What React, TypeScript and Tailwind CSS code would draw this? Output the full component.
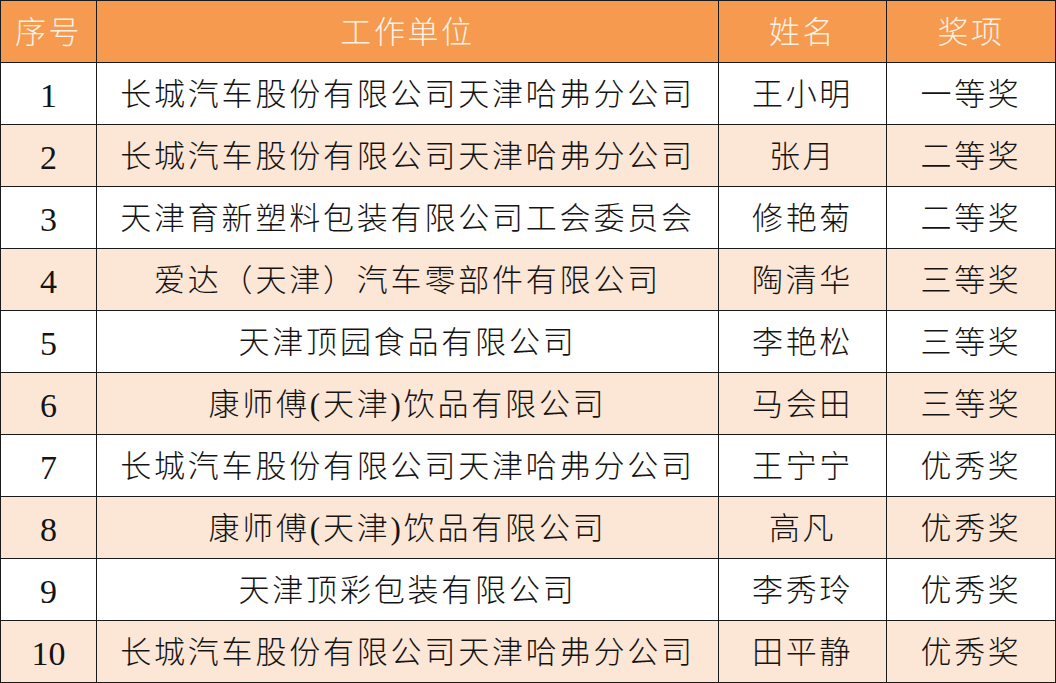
import React from "react";

const rows: [string, string, string, string][] = [
  ["1", "长城汽车股份有限公司天津哈弗分公司", "王小明", "一等奖"],
  ["2", "长城汽车股份有限公司天津哈弗分公司", "张月", "二等奖"],
  ["3", "天津育新塑料包装有限公司工会委员会", "修艳菊", "二等奖"],
  ["4", "爱达（天津）汽车零部件有限公司", "陶清华", "三等奖"],
  ["5", "天津顶园食品有限公司", "李艳松", "三等奖"],
  ["6", "康师傅(天津)饮品有限公司", "马会田", "三等奖"],
  ["7", "长城汽车股份有限公司天津哈弗分公司", "王宁宁", "优秀奖"],
  ["8", "康师傅(天津)饮品有限公司", "高凡", "优秀奖"],
  ["9", "天津顶彩包装有限公司", "李秀玲", "优秀奖"],
  ["10", "长城汽车股份有限公司天津哈弗分公司", "田平静", "优秀奖"],
];

const cell =
  "h-[62px] pt-[4px] flex items-center justify-center border-r border-b border-[#1a1a1a] whitespace-nowrap";

function App() {
  return (
    <div
      className="w-[1056px] h-[683px] bg-white text-[#141414] overflow-hidden font-light"
      style={{ fontFamily: '"Liberation Serif", "Noto Sans CJK SC", serif' }}
    >
      <div className="grid grid-cols-[96px_622px_168px_169px] border-l border-t border-[#1a1a1a]">
        {["序号", "工作单位", "姓名", "奖项"].map((h) => (
          <div
            key={h}
            className={`${cell} bg-[#f59a4f] text-[#fdf1e4] text-[31px] tracking-[2.6px]`}
          >
            {h}
          </div>
        ))}
        {rows.map((r, i) => {
          const bg = i % 2 === 1 ? "bg-[#fce6d6]" : "bg-white";
          return (
            <React.Fragment key={r[0]}>
              <div className={`${cell} ${bg} text-[34px]`}>{r[0]}</div>
              <div className={`${cell} ${bg} text-[31px] tracking-[2.8px]`}>{r[1]}</div>
              <div className={`${cell} ${bg} text-[31px] tracking-[2.6px]`}>{r[2]}</div>
              <div className={`${cell} ${bg} text-[31px] tracking-[2.6px]`}>{r[3]}</div>
            </React.Fragment>
          );
        })}
      </div>
    </div>
  );
}

export default App;
